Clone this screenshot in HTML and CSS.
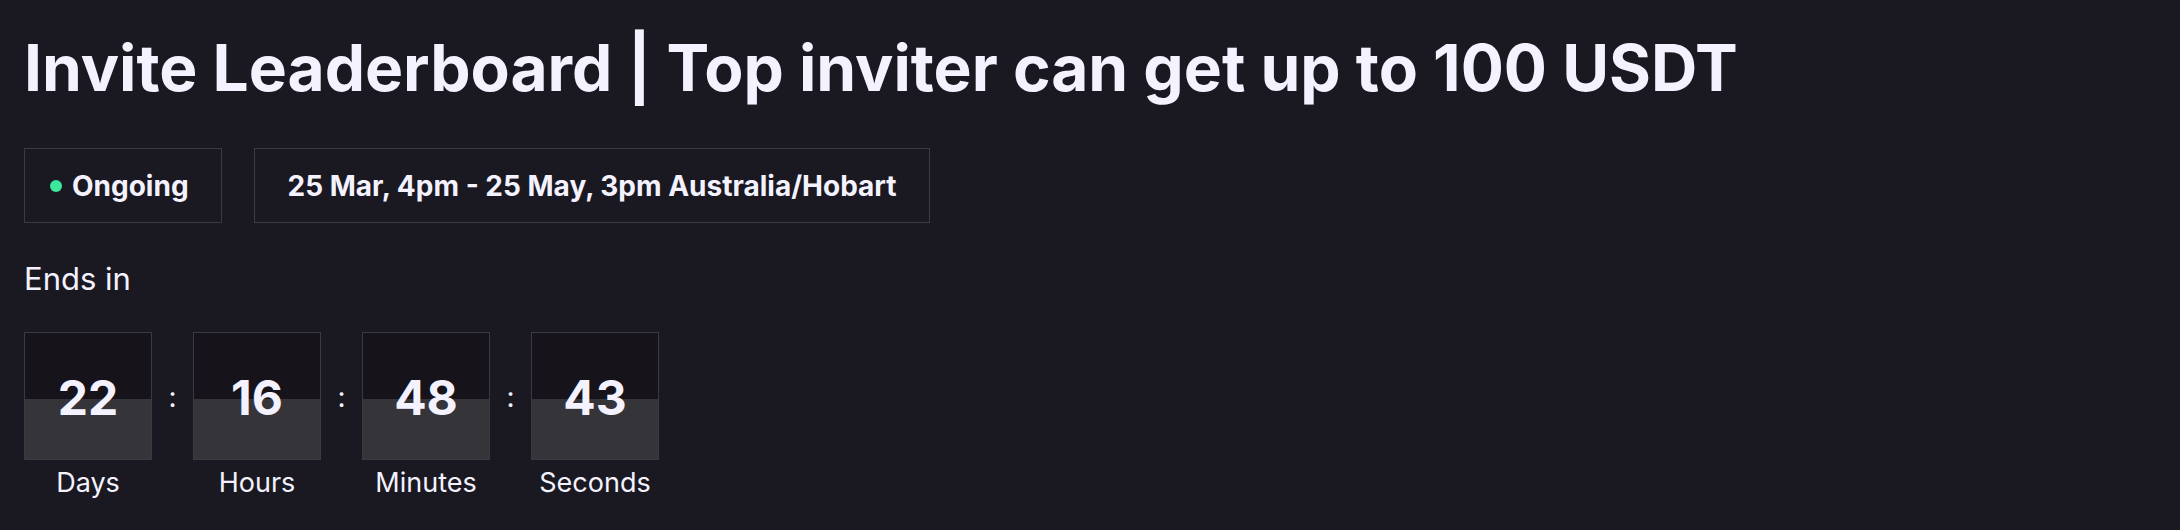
FILE: index.html
```html
<!DOCTYPE html>
<html lang="en">
<head>
<meta charset="utf-8">
<title>Invite Leaderboard</title>
<link rel="stylesheet" href="styles.css">
</head>
<body>
<main class="page">
  <h1 class="title">Invite Leaderboard | Top inviter can get up to 100 USDT</h1>
  <div class="meta">
    <div class="tag tag-status"><span class="dot"></span>Ongoing</div>
    <div class="tag">25 Mar, 4pm - 25 May, 3pm Australia/Hobart</div>
  </div>
  <p class="ends-label">Ends in</p>
  <div class="countdown">
    <div class="unit">
      <div class="digits">22</div>
      <div class="unit-label">Days</div>
    </div>
    <div class="sep">:</div>
    <div class="unit">
      <div class="digits">16</div>
      <div class="unit-label">Hours</div>
    </div>
    <div class="sep">:</div>
    <div class="unit">
      <div class="digits">48</div>
      <div class="unit-label">Minutes</div>
    </div>
    <div class="sep">:</div>
    <div class="unit">
      <div class="digits">43</div>
      <div class="unit-label">Seconds</div>
    </div>
  </div>
</main>
</body>
</html>
```

FILE: styles.css
```css
html, body {
  margin: 0;
  padding: 0;
  background: #1a1921;
}
body {
  font-family: Inter, "Noto Sans", sans-serif;
  color: #f4f2ff;
}
.page {
  padding: 29px 24px 0 24px;
}
.title {
  margin: 0;
  font-size: 64px;
  line-height: 77px;
  font-weight: 700;
  letter-spacing: 0;
  white-space: nowrap;
}
.meta {
  display: flex;
  gap: 32px;
  margin-top: 42px;
}
.tag {
  display: flex;
  align-items: center;
  box-sizing: border-box;
  height: 75px;
  padding: 0 32px 0 33px;
  border: 1px solid #3b3a42;
  font-size: 28px;
  font-weight: 700;
  white-space: nowrap;
}
.tag-status {
  padding-left: 25px;
}
.dot {
  width: 12px;
  height: 12px;
  border-radius: 50%;
  background: #3ce89c;
  margin-right: 10px;
}
.ends-label {
  margin: 37px 0 0 0;
  font-size: 31px;
  line-height: 38px;
  font-weight: 400;
}
.countdown {
  display: flex;
  align-items: flex-start;
  margin-top: 34px;
}
.unit {
  display: flex;
  flex-direction: column;
  align-items: center;
  width: 128px;
}
.digits {
  box-sizing: border-box;
  width: 128px;
  height: 128px;
  padding-top: 4px;
  border: 1px solid #3b3a42;
  background: linear-gradient(#16141a 0 66px, #353439 66px);
  display: flex;
  align-items: center;
  justify-content: center;
  font-size: 48px;
  font-weight: 700;
  line-height: 1;
}
.unit-label {
  margin-top: 7px;
  font-size: 27px;
  line-height: 32px;
  font-weight: 400;
  white-space: nowrap;
}
.sep {
  width: 41px;
  height: 128px;
  display: flex;
  align-items: center;
  justify-content: center;
  font-size: 28px;
  line-height: 28px;
  padding-top: 2px;
  box-sizing: border-box;
}
```
